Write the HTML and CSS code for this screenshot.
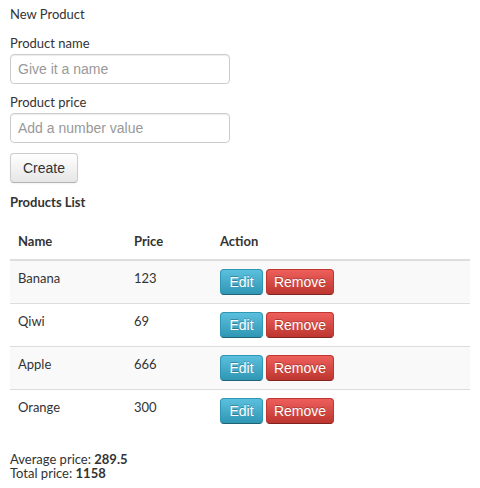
FILE: index.html
```html
<!DOCTYPE html>
<html>
<head>
<meta charset="utf-8">
<link rel="stylesheet" href="styles.css">
</head>
<body>
<div class="page">
  <div class="title">New Product</div>
  <form class="form">
    <label class="field">
      <span class="label">Product name</span>
      <input class="input" type="text" placeholder="Give it a name">
    </label>
    <label class="field">
      <span class="label">Product price</span>
      <input class="input" type="text" placeholder="Add a number value">
    </label>
    <button class="btn btn-default" type="button">Create</button>
  </form>
  <h2 class="list-title">Products List</h2>
  <table class="table">
    <thead>
      <tr><th class="c-name">Name</th><th class="c-price">Price</th><th>Action</th></tr>
    </thead>
    <tbody>
      <tr><td>Banana</td><td>123</td><td><button class="btn btn-info">Edit</button><button class="btn btn-danger">Remove</button></td></tr>
      <tr><td>Qiwi</td><td>69</td><td><button class="btn btn-info">Edit</button><button class="btn btn-danger">Remove</button></td></tr>
      <tr><td>Apple</td><td>666</td><td><button class="btn btn-info">Edit</button><button class="btn btn-danger">Remove</button></td></tr>
      <tr><td>Orange</td><td>300</td><td><button class="btn btn-info">Edit</button><button class="btn btn-danger">Remove</button></td></tr>
    </tbody>
  </table>
  <div class="summary">
    <div>Average price: <b>289.5</b></div>
    <div>Total price: <b>1158</b></div>
  </div>
</div>
</body>
</html>
```

FILE: styles.css
```css
* { box-sizing: border-box; }
html, body { margin: 0; padding: 0; background: #fff; }
body {
  font-family: "Lato", "Open Sans", sans-serif;
  font-size: 13px;
  color: #333;
}
.page { padding: 6px 10px 0 10px; }
.title { line-height: 16px; }
.form { display: flex; flex-direction: column; align-items: flex-start; margin-top: 13px; }
.field { display: flex; flex-direction: column; margin-bottom: 10px; }
.label { line-height: 16px; margin-bottom: 3px; }
.input {
  width: 220px; height: 30px;
  border: 1px solid #ccc; border-radius: 4px;
  padding: 4px 7px;
  font-family: "Liberation Sans", Arial, sans-serif;
  font-size: 14px; color: #555;
  box-shadow: inset 0 1px 1px rgba(0,0,0,0.075);
}
.input::placeholder { color: #999; }
.btn {
  font-family: "Liberation Sans", Arial, sans-serif;
  font-size: 14px;
  border-radius: 4px;
  border: 1px solid;
  cursor: pointer;
  padding: 0;
}
.btn-default {
  width: 68px; height: 30px;
  color: #333;
  background: linear-gradient(#fff, #e6e6e6);
  border-color: #ccc #ccc #b3b3b3;
  box-shadow: inset 0 1px 0 rgba(255,255,255,.2), 0 1px 2px rgba(0,0,0,.05);
}
.list-title { font-size: 13px; font-weight: bold; margin: 11px 0 0 0; line-height: 16px; }
.table { width: 460px; border-collapse: collapse; margin-top: 23px; }
.table th { text-align: left; font-weight: bold; padding: 0 8px 10px 8px; line-height: 16px; border-bottom: 2px solid #ddd; }
.table td { padding: 7px 8px 0 8px; height: 43px; vertical-align: top; line-height: 20px; border-top: 1px solid #ddd; }
.table tbody tr:first-child td { border-top: none; }
.table tbody tr:nth-child(odd) { background: #f9f9f9; }
.c-name { width: 116px; }
.c-price { width: 86px; }
.table td .btn { vertical-align: top; margin-top: 1px; height: 26px; color: #fff; text-shadow: 0 -1px 0 rgba(0,0,0,.25); }
.btn-info {
  width: 43px;
  background: linear-gradient(#5bc0de, #2f96b4);
  border-color: #2f96b4 #2f96b4 #1f6377;
}
.btn-danger {
  width: 68px; margin-left: 3px;
  background: linear-gradient(#ee5f5b, #bd362f);
  border-color: #bd362f #bd362f #802420;
}
.summary { margin-top: 20px; line-height: 14px; }
.summary b { font-weight: bold; }
```
